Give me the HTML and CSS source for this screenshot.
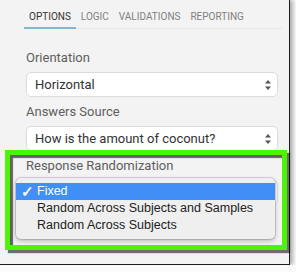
FILE: index.html
```html
<!DOCTYPE html>
<html lang="en">
<head>
  <meta charset="UTF-8">
  <title>Question options</title>
  <link rel="stylesheet" href="styles.css">
</head>
<body>
  <div class="panel">
    <div class="tabs">
      <div class="tab active">Options</div>
      <div class="tab">Logic</div>
      <div class="tab">Validations</div>
      <div class="tab">Reporting</div>
    </div>

    <div class="form">
      <label>Orientation</label>
      <div class="select">Horizontal
        <svg class="arrows" width="6" height="10" viewBox="0 0 6 10"><path d="M0 3.6 3 0 6 3.6Z M0 6.4 3 10 6 6.4Z" fill="#555"/></svg>
      </div>

      <label>Answers Source</label>
      <div class="select">How is the amount of coconut?
        <svg class="arrows" width="6" height="10" viewBox="0 0 6 10"><path d="M0 3.6 3 0 6 3.6Z M0 6.4 3 10 6 6.4Z" fill="#555"/></svg>
      </div>

      <label>Response Randomization</label>
      <!-- value is hidden under the open menu -->
      <div class="select">
        <svg class="arrows" width="6" height="10" viewBox="0 0 6 10"><path d="M0 3.6 3 0 6 3.6Z M0 6.4 3 10 6 6.4Z" fill="#555"/></svg>
      </div>
    </div>

    <div class="highlight"></div>

    <ul class="menu">
      <li class="picked"><span class="check">✓</span>Fixed</li>
      <li>Random Across Subjects and Samples</li>
      <li>Random Across Subjects</li>
    </ul>
  </div>
</body>
</html>
```

FILE: styles.css
```css
body {
  margin: 0;
  background: #fafafa;
  font-family: Roboto, "Liberation Sans", sans-serif;
}

.panel {
  position: relative;
  width: 289px;
  height: 264px;
  background: #f3f3f3;
  border-right: 1px solid #1c1c1c;
  border-bottom: 1px solid #1c1c1c;
  box-shadow: 3px 0 4px rgba(0, 0, 0, 0.3);
}

.tabs {
  display: flex;
  margin: 0 7px 0 24px;
  padding-top: 11px;
  border-bottom: 1px solid #e6e6e6;
}

.tab {
  font-size: 10px;
  line-height: 12px;
  text-transform: uppercase;
  color: #808080;
  padding: 0 5px 4px;
  border-bottom: 2px solid transparent;
  margin-bottom: -1px;
}

.tab.active {
  color: #333;
  border-bottom-color: #84b8d2;
}

.form {
  padding: 21px 11px 0 26px;
}

label {
  display: block;
  font-size: 13px;
  line-height: 16px;
  color: #5e5e5e;
  margin-bottom: 6px;
}

.select {
  position: relative;
  box-sizing: border-box;
  height: 25px;
  margin-bottom: 7px;
  padding-left: 8px;
  background: #fff;
  border: 1px solid #dcdcdc;
  border-radius: 5px;
  font-size: 13px;
  line-height: 23px;
  color: #333;
}

.arrows {
  position: absolute;
  right: 6px;
  top: 7px;
}

.highlight {
  position: absolute;
  left: 5px;
  top: 150px;
  width: 282px;
  height: 100px;
  box-sizing: border-box;
  border: 5px solid #4cf505;
  box-shadow: 3px 3px 1px rgba(0, 0, 0, 0.55), inset 3px 3px 1px rgba(0, 0, 0, 0.6);
}

.menu {
  position: absolute;
  left: 16px;
  top: 178px;
  width: 259px;
  margin: 0;
  padding: 5px 0;
  list-style: none;
  background: #efefef;
  border-radius: 5px;
  box-shadow: 0 0 0 1px rgba(0, 0, 0, 0.12), 0 2px 5px rgba(0, 0, 0, 0.25);
  font-family: "Liberation Sans", Arial, sans-serif;
  font-size: 12.5px;
}

.menu li {
  position: relative;
  line-height: 17px;
  padding-left: 21px;
  color: #222;
}

.menu li.picked {
  background: #3f8ff6;
  color: #fff;
}

.check {
  position: absolute;
  left: 5px;
  top: 0;
  font-size: 15px;
  font-weight: bold;
}
```
